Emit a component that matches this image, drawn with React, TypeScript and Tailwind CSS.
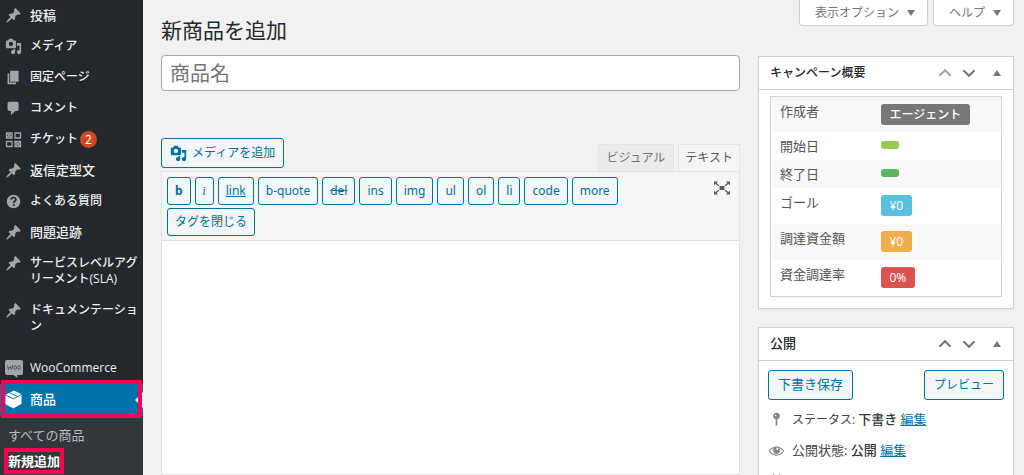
import type { ReactNode } from 'react'
import clsx from 'clsx'

const paths = {
    post: 'M10.44 3.02l1.82-1.82 6.36 6.35-1.83 1.82c-1.05-.68-2.48-.57-3.41.36l-.75.75c-.92.93-1.04 2.35-.35 3.41l-1.83 1.82-2.41-2.41-2.8 2.79c-.42.42-3.38 2.71-3.8 2.29s1.86-3.39 2.28-3.81l2.79-2.79L4.1 9.36l1.83-1.82c1.05.69 2.48.57 3.4-.36l.75-.75c.93-.92 1.05-2.35.36-3.41z',
    media: 'M13 11V4c0-.55-.45-1-1-1h-1.67L9 1H5L3.67 3H2c-.55 0-1 .45-1 1v7c0 .55.45 1 1 1h10c.55 0 1-.45 1-1zM7 4.5c1.38 0 2.5 1.12 2.5 2.5S8.38 9.5 7 9.5 4.5 8.38 4.5 7 5.62 4.5 7 4.5zM14 6h5v10.5c0 1.38-1.12 2.5-2.5 2.5S14 17.88 14 16.5s1.12-2.5 2.5-2.5c.17 0 .34.02.5.05V9h-3V6zm-4 8.05V13h2v3.5c0 1.38-1.12 2.5-2.5 2.5S7 17.88 7 16.5 8.12 14 9.5 14c.17 0 .34.02.5.05z',
    page: 'M6 15V2h10v13H6zm-1 1h8v2H3V5h2v11z',
    comment: 'M5 2h9c1.1 0 2 .9 2 2v7c0 1.1-.9 2-2 2h-2l-5 5v-5H5c-1.1 0-2-.9-2-2V4c0-1.1.9-2 2-2z',
    key: 'M14 6c0 1.86-1.28 3.41-3 3.86V16c0 1-2 2-2 2V9.86c-1.72-.45-3-2-3-3.86 0-2.21 1.79-4 4-4s4 1.79 4 4zM8 5c0 .55.45 1 1 1s1-.45 1-1-.45-1-1-1-1 .45-1 1z',
    eye: 'M18.3 9.5C15 4.9 8.5 3.8 3.9 7.2c-1.2.9-2.2 2.1-3 3.4.2.4.5.8.8 1.2 3.3 4.6 9.6 5.6 14.2 2.4.9-.7 1.7-1.4 2.4-2.4.3-.4.5-.8.8-1.2-.3-.4-.5-.8-.8-1.1zm-8.2-2.3c.5-.5 1.3-.5 1.8 0s.5 1.3 0 1.8-1.3.5-1.8 0-.5-1.3 0-1.8zm-.1 7.7c-3.1 0-6-1.6-7.7-4.2C3.5 9 5.1 7.8 7 7.2c-.7.8-1 1.7-1 2.7 0 2.2 1.7 4.1 4 4.1 2.2 0 4.1-1.7 4.1-4v-.1c0-1-.4-2-1.1-2.7 1.9.6 3.5 1.8 4.7 3.5-1.7 2.6-4.6 4.2-7.7 4.2z',
    calendar: 'M15 4h3v14H2V4h3V3c0-.83.67-1.5 1.5-1.5S8 2.17 8 3v1h4V3c0-.83.67-1.5 1.5-1.5S15 2.17 15 3v1zM6 3v2.5h1V3c0-.6-1-.6-1 0zm7 0v2.5h1V3c0-.6-1-.6-1 0zM4 8v8h12V8z',
    up: 'M3 13.500L10 6.500l7 7',
    down: 'M3 6.500L10 13.500l7-7'
}

function Glyph({ d, className }: { d: string; className?: string }) {
    return (
        <svg viewBox="0 0 20 20" fill="currentColor" fillRule="evenodd" aria-hidden="true" className={clsx('shrink-0', className ?? 'size-[17px]')}>
            <path d={d} />
        </svg>
    )
}

function TicketIcon() {
    return (
        <svg viewBox="0 0 17 17" fill="none" stroke="currentColor" strokeWidth="1.3" aria-hidden="true" className="size-[17px] shrink-0">
            <path d="M1.5 2h5.5v5H1.5zM10 2h5.5v5H10zM1.5 10.5h5.5v5H1.5zM10 10.5h5.5v5H10z" />
            <path d="M2 2.5l4.5 4M6.5 2.5l-4.5 4M10.5 11l4.5 4M15 11l-4.5 4" />
        </svg>
    )
}

function HelpIcon() {
    return (
        <svg viewBox="0 0 20 20" aria-hidden="true" className="size-[17px] shrink-0">
            <circle cx="10" cy="10" r="8" fill="currentColor" />
            <path d="M7.3 8c0-3.600 5.500-3.400 5.500-.3 0 2-2.600 2-2.600 4" fill="none" stroke="#23282d" strokeWidth="1.9" />
            <circle cx="10.2" cy="14.2" r="1.2" fill="#23282d" />
        </svg>
    )
}

function WooIcon() {
    return (
        <svg viewBox="0 0 18 18" aria-hidden="true" className="h-[18px] w-[18px] shrink-0">
            <path d="M2 0h14a2 2 0 0 1 2 2v11a2 2 0 0 1-2 2h-4l.5 3L8.5 15H2a2 2 0 0 1-2-2V2a2 2 0 0 1 2-2z" fill="currentColor" />
            <path d="M2.500 5.500l1 4 1.700-3 1.500 3 1-4.500" fill="none" stroke="#4b5157" strokeWidth="1" />
            <ellipse cx="10.2" cy="7.6" rx="1.3" ry="1.9" fill="none" stroke="#4b5157" strokeWidth=".9" />
            <ellipse cx="14" cy="7.6" rx="1.3" ry="1.9" fill="none" stroke="#4b5157" strokeWidth=".9" />
        </svg>
    )
}

function BoxIcon() {
    return (
        <svg viewBox="0 0 18 20" aria-hidden="true" className="h-[19px] w-[17px] shrink-0">
            <path d="M9.500 .5L17.500 4.500V14.500L9 19.500.5 15V5z" fill="#fff" />
            <path d="M.5 5.300L8.800 9.300l8.700-4.600M5.200 3l8.200 4" fill="none" stroke="#0073aa" strokeWidth="1" />
        </svg>
    )
}

const menu: { label: string; icon: ReactNode; count?: number; small?: boolean }[] = [
    { label: '投稿', icon: <Glyph d={paths.post} /> },
    { label: 'メディア', icon: <Glyph d={paths.media} />, small: true },
    { label: '固定ページ', icon: <Glyph d={paths.page} />, small: true },
    { label: 'コメント', icon: <Glyph d={paths.comment} />, small: true },
    { label: 'チケット', icon: <TicketIcon />, count: 2, small: true },
    { label: '返信定型文', icon: <Glyph d={paths.post} /> },
    { label: 'よくある質問', icon: <HelpIcon />, small: true },
    { label: '問題追跡', icon: <Glyph d={paths.post} /> },
    { label: 'サービスレベルアグリーメント(SLA)', icon: <Glyph d={paths.post} />, small: true },
    { label: 'ドキュメンテーション', icon: <Glyph d={paths.post} />, small: true }
]

const quicktags = [
    { label: 'b', style: 'font-bold' },
    { label: 'i', style: 'italic font-serif' },
    { label: 'link', style: 'underline' },
    { label: 'b-quote' },
    { label: 'del', style: 'line-through' },
    { label: 'ins' },
    { label: 'img' },
    { label: 'ul' },
    { label: 'ol' },
    { label: 'li' },
    { label: 'code' },
    { label: 'more' },
    { label: 'タグを閉じる' }
]

const campaign = [
    { label: '作成者', value: 'エージェント', color: 'bg-[#777777]' },
    { label: '開始日', value: '', color: 'bg-[#96ca4a]' },
    { label: '終了日', value: '', color: 'bg-[#5cb85c]' },
    { label: 'ゴール', value: '¥0', color: 'bg-[#5bc0de]' },
    { label: '調達資金額', value: '¥0', color: 'bg-[#f0ad4e]' },
    { label: '資金調達率', value: '0%', color: 'bg-[#d9534f]' }
]

function Sidebar() {
    return (
        <nav className="w-[143px] shrink-0 bg-[#23282d] text-[13px] leading-4 text-[#eeeeee] font-medium">
            <ul>
                {menu.map(item => (
                    <li key={item.label}>
                        <a href="#" className="flex gap-2 pt-[7px] pb-2 pl-[5px]">
                            <span className="h-4 text-[#a0a5aa]">{item.icon}</span>
                            <span className={clsx('min-w-0 flex-1 break-all', item.small && 'text-[12px]')}>
                                {item.label}
                                {item.count ? (
                                    <span className="ml-[2px] -my-1 inline-block size-[17px] rounded-full bg-[#ca4a1f] text-center align-middle text-[12px] leading-[17px] text-white">
                                        {item.count}
                                    </span>
                                ) : null}
                            </span>
                        </a>
                    </li>
                ))}
                <li className="mt-[11px]">
                    <a href="#" className="flex gap-2 pt-[7px] pb-2 pl-[5px] text-[12px]">
                        <span className="h-4 w-[17px] text-[#a0a5aa]"><WooIcon /></span>
                        WooCommerce
                    </a>
                </li>
                <li className="relative">
                    <a href="#" className="flex gap-2 bg-[#0073aa] pt-[7px] pb-2 pl-[5px] text-white">
                        <span className="-mt-px h-4"><BoxIcon /></span>
                        商品
                    </a>
                    <span className="absolute top-2 right-0 border-y-8 border-r-8 border-y-transparent border-r-[#f1f1f1]" />
                    <span className="pointer-events-none absolute inset-x-px -top-1 -bottom-[3px] border-4 border-[#ff0050]" />
                </li>
            </ul>
            <ul className="h-full bg-[#32373c] pt-[7px]">
                <li>
                    <a href="#" className="block px-2 py-[5px] font-normal text-[#b4b9be]">すべての商品</a>
                </li>
                <li className="flex">
                    <a href="#" className="relative block px-2 py-[5px] font-bold text-white">
                        新規追加
                        <span className="pointer-events-none absolute inset-y-0 right-1 left-1 border-4 border-[#ff0050]" />
                    </a>
                </li>
            </ul>
        </nav>
    )
}

function Postbox({ title, first, children }: { title: string; first?: boolean; children: ReactNode }) {
    return (
        <section className="border border-[#ccd0d4] bg-white shadow-xs">
            <header className="flex h-[33px] items-center border-b border-[#ccd0d4] pl-[11px] pr-2">
                <h2 className={clsx('flex-1 font-medium text-[#23282d]', first ? 'text-[12px]' : 'text-[13px]')}>{title}</h2>
                <button aria-label="上に移動" className={first ? 'text-[#a0a5aa]' : 'text-[#72777c]'}>
                    <Chevron d={paths.up} />
                </button>
                <button aria-label="下に移動" className="ml-2 text-[#72777c]">
                    <Chevron d={paths.down} />
                </button>
                <button aria-label="パネルを閉じる" className="ml-3 flex size-4 items-center justify-center text-[#72777c]">
                    <svg viewBox="0 0 8 6" className="h-[6px] w-2" fill="currentColor"><path d="M4 0l4 6H0z" /></svg>
                </button>
            </header>
            {children}
        </section>
    )
}

function Chevron({ d }: { d: string }) {
    return (
        <svg viewBox="0 0 20 20" fill="none" stroke="currentColor" strokeWidth="2.5" aria-hidden="true" className="size-4">
            <path d={d} />
        </svg>
    )
}

function ScreenTab({ children }: { children: ReactNode }) {
    return (
        <button className="flex h-[26px] items-center gap-2 rounded-b border border-t-0 border-[#ccd0d4] bg-white pr-4 pl-[15px] text-[12px] text-[#72777c]">
            {children}
            <svg viewBox="0 0 8 6" className="-mr-1 h-[6px] w-2" fill="currentColor" aria-hidden="true"><path d="M0 0h8L4 6z" /></svg>
        </button>
    )
}

function Editor() {
    return (
        <div className="mt-[47px] flex min-h-0 flex-1 flex-col">
            <div className="flex items-end justify-between">
                <button className="mb-[3px] flex h-[30px] items-center gap-[5px] rounded-[3px] border border-[#0071a1] bg-[#f3f5f6] px-2 text-[12px] text-[#0071a1]">
                    <Glyph d={paths.media} className="size-[17px]" />
                    メディアを追加
                </button>
                <div className="flex gap-1 text-[12px]">
                    <button className="h-[27px] border border-b-0 border-[#e5e5e5] bg-[#ebebeb] px-2 text-[#72777c]">ビジュアル</button>
                    <button className="h-[27px] border border-b-0 border-[#e5e5e5] bg-[#f5f5f5] px-[6px] text-[#555d66]">テキスト</button>
                </div>
            </div>
            <div className="flex min-h-0 flex-1 flex-col border border-[#e0e2e4] bg-white">
                <div className="flex items-start justify-between border-b border-[#dddddd] bg-[#f5f5f5] p-[5px] pb-1">
                    <div className="flex flex-1 flex-wrap gap-x-1 gap-y-[3px]">
                        {quicktags.map(tag => (
                            <button
                                key={tag.label}
                                className={clsx(
                                    'h-7 rounded-[3px] border border-[#0071a1] bg-[#f3f5f6] px-[7px] text-[12px] text-[#0071a1]',
                                    tag.style === 'italic font-serif' ? 'px-2' : "font-['Noto_Sans','Noto_Sans_CJK_JP',sans-serif]",
                                    tag.style
                                )}
                            >
                                {tag.label}
                            </button>
                        ))}
                    </div>
                    <button aria-label="集中執筆モード" className="mt-1 mr-1 ml-24 text-[#555d66]">
                        <svg viewBox="0 0 16 14" className="h-[14px] w-4" fill="currentColor" aria-hidden="true">
                            <path d="M5.500 5h5v4h-5zM0 .5h4L0 4.500zM16 .5h-4l4 4zM0 13.500h4l-4-4zM16 13.500h-4l4-4z" />
                            <path d="M1 1.500l3.800 3.200M15 1.500l-3.800 3.200M1 12.500l3.800-3.200M15 12.500l-3.800-3.200" stroke="currentColor" strokeWidth="1.4" />
                        </svg>
                    </button>
                </div>
                <textarea aria-label="商品の説明" className="min-h-0 flex-1 resize-none bg-white p-2 outline-none" />
            </div>
        </div>
    )
}

export default function App() {
    return (
        <div className="flex h-screen overflow-hidden bg-[#f1f1f1] font-['Open_Sans','Noto_Sans_CJK_JP',sans-serif] text-[13px] text-[#444444]">
            <Sidebar />
            <main className="flex min-w-0 flex-1 gap-[18px] pr-[10px] pl-[18px]">
                <div className="flex min-w-0 flex-1 flex-col">
                    <h1 className="pt-4 text-[21px] leading-7 text-[#23282d]">新商品を追加</h1>
                    <input
                        aria-label="商品名"
                        placeholder="商品名"
                        className="mt-[11px] h-9 w-full shrink-0 rounded border border-[#a5abb1] bg-white px-2 text-[20px] placeholder:text-[#757575]"
                    />
                    <Editor />
                </div>
                <aside className="w-[256px] shrink-0">
                    <div className="flex justify-end gap-[5px]">
                        <ScreenTab>表示オプション</ScreenTab>
                        <ScreenTab>ヘルプ</ScreenTab>
                    </div>
                    <div className="mt-[30px] flex flex-col gap-[18px]">
                        <Postbox title="キャンペーン概要" first>
                            <div className="px-[11px] pt-[6px] pb-[11px]">
                                <table className="w-full border border-[#ccd6dc]">
                                    <tbody>
                                        {campaign.map(row => (
                                            <tr key={row.label} className="align-top odd:bg-[#f9f9f9]">
                                                <th scope="row" className="w-[101px] px-[9px] pt-[5px] pb-1 text-left leading-[19px] font-normal text-[#555555]">
                                                    {row.label}
                                                </th>
                                                <td className={clsx('px-[9px] pt-[7px]', row.value.length < 3 ? 'pb-2' : 'pb-[7px]')}>
                                                    {row.value ? (
                                                        <span className={clsx('block h-[21px] w-fit rounded-[3px] px-[9px] text-[12px] leading-[21px] font-medium text-white', row.color)}>
                                                            {row.value}
                                                        </span>
                                                    ) : (
                                                        <span className={clsx('mt-[2px] block h-2 w-[18px] rounded-[3px]', row.color)} />
                                                    )}
                                                </td>
                                            </tr>
                                        ))}
                                    </tbody>
                                </table>
                            </div>
                        </Postbox>
                        <Postbox title="公開">
                            <div className="px-[9px] pt-[9px]">
                                <div className="flex justify-between">
                                    <button className="h-[30px] rounded-[3px] border border-[#0071a1] bg-[#f3f5f6] px-[9px] text-[#0071a1]">下書き保存</button>
                                    <button className="h-[30px] rounded-[3px] border border-[#0071a1] bg-[#f3f5f6] px-[9px] text-[12px] text-[#0071a1]">プレビュー</button>
                                </div>
                                <div className="mt-1 leading-[31px]">
                                    <p className="flex items-center gap-[7px]">
                                        <Glyph d={paths.key} className="size-[17px] text-[#82878c]" />
                                        <span className="text-[12px]">
                                            ステータス: <b className="text-[13px] font-medium text-[#32373c]">下書き</b> <a href="#" className="text-[13px] text-[#0073aa] underline">編集</a>
                                        </span>
                                    </p>
                                    <p className="flex items-center gap-[7px]">
                                        <Glyph d={paths.eye} className="size-[17px] text-[#82878c]" />
                                        <span>
                                            公開状態: <b className="font-medium text-[#32373c]">公開</b> <a href="#" className="text-[#0073aa] underline">編集</a>
                                        </span>
                                    </p>
                                    <p className="flex min-h-[31px] items-center gap-[7px]">
                                        <Glyph d={paths.calendar} className="size-[17px] text-[#82878c]" />
                                    </p>
                                </div>
                            </div>
                        </Postbox>
                    </div>
                </aside>
            </main>
        </div>
    )
}
